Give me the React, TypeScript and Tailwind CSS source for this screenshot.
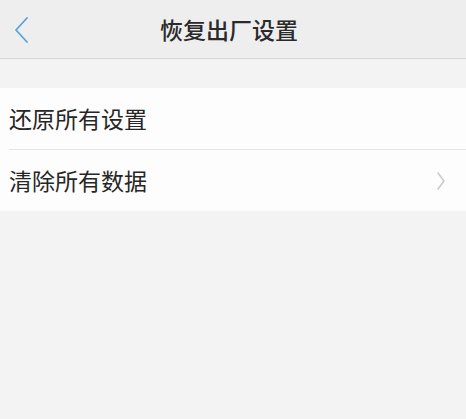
import React from "react";

const font = { fontFamily: '"Noto Sans CJK SC", "Noto Sans", sans-serif' };

export default function App() {
  return (
    <div className="w-[466px] h-[419px] bg-[#f3f3f3] overflow-hidden" style={font}>
      <div className="relative h-[59px] bg-[#eeeeee] border-b border-[#d6d6d6] flex items-center justify-center">
        <svg className="absolute left-[12px] top-[16px]" width="18" height="28" viewBox="0 0 18 28">
          <path d="M15 2 L4 14 L15 26" fill="none" stroke="#5aa3d8" strokeWidth="1.8" strokeLinecap="round" strokeLinejoin="round" />
        </svg>
        <span className="text-[23px] text-[#2a2a2a] font-medium leading-none ml-[-8px]">恢复出厂设置</span>
      </div>
      <div className="h-[29px]" />
      <div className="bg-[#fdfdfd] pl-[9px]">
        <div className="h-[62px] flex items-center border-b border-[#e6e6e6]">
          <span className="text-[23px] text-[#262626] leading-none">还原所有设置</span>
        </div>
        <div className="h-[61px] flex items-center pr-[20px] justify-between">
          <span className="text-[23px] text-[#262626] leading-none">清除所有数据</span>
          <svg width="10" height="20" viewBox="0 0 10 20">
            <path d="M2 2 L8 10 L2 18" fill="none" stroke="#c8c8c8" strokeWidth="1.5" strokeLinecap="round" strokeLinejoin="round" />
          </svg>
        </div>
      </div>
    </div>
  );
}
